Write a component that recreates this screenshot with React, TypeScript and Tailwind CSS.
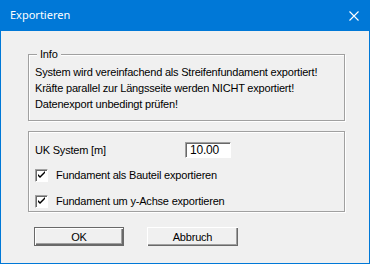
import React from "react";

function Check() {
  return (
    <div className="w-[13px] h-[13px] bg-white border border-t-[#a0a0a0] border-l-[#a0a0a0] border-r-white border-b-white shadow-[inset_1px_1px_0_#696969] flex items-center justify-center">
      <svg width="9" height="9" viewBox="0 0 9 9">
        <path d="M1 3 L1 5 L3 7 L8 2 L8 0 L3 5 Z" fill="#000" />
      </svg>
    </div>
  );
}

export default function App() {
  return (
    <div
      className="w-[370px] h-[264px] bg-[#0078d7] flex flex-col px-px pb-px text-black"
      style={{ fontFamily: '"Liberation Sans", Arial, sans-serif' }}
    >
      <div className="h-[31px] flex items-center justify-between pl-[9px] pr-[10px]">
        <span className="text-white text-[11px]" style={{ fontFamily: '"Noto Sans", sans-serif' }}>
          Exportieren
        </span>
        <svg width="10" height="10" viewBox="0 0 10 10">
          <path d="M0.5 0.5 L9.5 9.5 M9.5 0.5 L0.5 9.5" stroke="#fff" strokeWidth="1.1" />
        </svg>
      </div>
      <div className="flex-1 bg-[#f0f0f0] pl-[27px] pt-[23px] text-[11px] tracking-[-0.2px] leading-[16px] whitespace-nowrap">
        <div className="relative w-[317px] h-[67px] border border-[#a0a0a0] shadow-[inset_1px_1px_0_#fff,1px_1px_0_#fff] pl-[6px] pt-[9px]">
          <span className="absolute left-[8px] top-[-9px] bg-[#f0f0f0] px-[3px]">Info</span>
          <div className="flex flex-col">
            <span>System wird vereinfachend als Streifenfundament exportiert!</span>
            <span>Kräfte parallel zur Längsseite werden NICHT exportiert!</span>
            <span>Datenexport unbedingt prüfen!</span>
          </div>
        </div>
        <div className="mt-[10px] w-[317px] h-[81px] border border-[#a0a0a0] shadow-[inset_1px_1px_0_#fff,1px_1px_0_#fff] pl-[6px] pt-[10px]">
          <div className="flex items-center">
            <span className="w-[150px]">UK System [m]</span>
            <div className="w-[46px] h-[16px] bg-white border border-t-[#a0a0a0] border-l-[#a0a0a0] border-r-white border-b-white shadow-[inset_1px_1px_0_#696969] pl-[4px] flex items-center text-[12px]">
              10.00
            </div>
          </div>
          <div className="flex items-center mt-[9px]">
            <Check />
            <span className="ml-[8px]">Fundament als Bauteil exportieren</span>
          </div>
          <div className="flex items-center mt-[10px]">
            <Check />
            <span className="ml-[8px]">Fundament um y-Achse exportieren</span>
          </div>
        </div>
        <div className="flex gap-[23px] mt-[15px] pl-[6px]">
          <button className="w-[90px] h-[19px] border border-[#696969] bg-[#f0f0f0] shadow-[inset_1px_1px_0_#fff,inset_-1px_-1px_0_#696969,inset_-2px_-2px_0_#a0a0a0] flex items-center justify-center">
            OK
          </button>
          <button className="w-[91px] h-[19px] bg-[#f0f0f0] shadow-[inset_1px_1px_0_#fff,inset_-1px_-1px_0_#696969,inset_-2px_-2px_0_#a0a0a0] flex items-center justify-center">
            Abbruch
          </button>
        </div>
      </div>
    </div>
  );
}
